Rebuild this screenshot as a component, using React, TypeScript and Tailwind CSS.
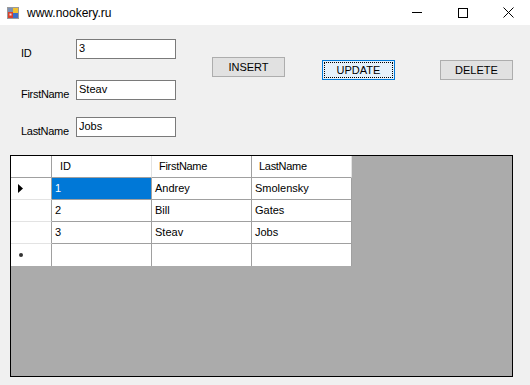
import { useState } from 'react'

const rows = [
  { id: '1', first: 'Andrey', last: 'Smolensky' },
  { id: '2', first: 'Bill', last: 'Gates' },
  { id: '3', first: 'Steav', last: 'Jobs' },
]

function FormIcon() {
  return (
    <svg width="12" height="12" viewBox="0 0 12 12">
      <rect x="0.5" y="0.5" width="11" height="11" fill="#f4f4f4" stroke="#9a9a9a" />
      <rect x="1" y="1" width="5" height="4" fill="#7a8fb3" />
      <rect x="6" y="1" width="5" height="5" fill="#f2c230" />
      <rect x="1" y="5" width="5" height="6" fill="#d9402b" />
      <rect x="6" y="6" width="5" height="5" fill="#3c6fc8" />
      <rect x="2.5" y="6.5" width="2" height="2" fill="#fbe0d8" />
    </svg>
  )
}

function Field({ label, value, mt }: { label: string; value: string; mt: string }) {
  return (
    <div className={`flex h-[20px] ${mt}`}>
      <div className="w-[55px] pt-[8px] text-[11px] leading-[13px] tracking-[-0.3px] text-black">{label}</div>
      <input
        defaultValue={value}
        className="h-[20px] w-[100px] border border-[#7a7a7a] bg-white px-[2px] pb-[2px] text-[11px] text-black outline-none"
      />
    </div>
  )
}

function Btn({ label, focused }: { label: string; focused?: boolean }) {
  return (
    <button
      className={`h-[20px] w-[73px] border text-[11px] text-black ${
        focused ? 'border-[#0078d7] bg-[#e5f1fb] p-[1px]' : 'border-[#adadad] bg-[#e1e1e1]'
      }`}
    >
      {focused ? (
        <span className="flex h-full w-full items-center justify-center border border-dotted border-black">{label}</span>
      ) : (
        label
      )}
    </button>
  )
}

export default function App() {
  const [selected] = useState(0)

  return (
    <div className="h-[385px] w-[530px] overflow-hidden bg-[#f0f0f0] font-['Liberation_Sans',Arial,sans-serif]">
      {/* заголовок окна */}
      <div className="flex h-[25px] items-center bg-white">
        <div className="ml-[7px] mt-[1px]">
          <FormIcon />
        </div>
        <div className="ml-[8px] text-[12px] text-black">www.nookery.ru</div>
        <div className="ml-auto flex h-full">
          <div className="flex w-[46px] items-center justify-center">
            <div className="h-px w-[10px] bg-black" />
          </div>
          <div className="flex w-[46px] items-center justify-center">
            <div className="h-[10px] w-[10px] border border-black" />
          </div>
          <div className="flex w-[44px] items-center justify-center">
            <svg width="11" height="11" viewBox="0 0 11 11">
              <path d="M0.5 0.5 L10.5 10.5 M10.5 0.5 L0.5 10.5" stroke="#000" strokeWidth="1" />
            </svg>
          </div>
        </div>
      </div>

      {/* поля и кнопки */}
      <div className="flex h-[130px]">
        <div className="ml-[21px] flex flex-col">
          <Field label="ID" value="3" mt="mt-[14px]" />
          <Field label="FirstName" value="Steav" mt="mt-[21px]" />
          <Field label="LastName" value="Jobs" mt="mt-[17px]" />
        </div>
        <div className="ml-[36px] mt-[32px] flex items-start">
          <Btn label="INSERT" />
          <div className="ml-[37px]">
            <Btn label="UPDATE" focused />
          </div>
          <div className="ml-[45px]">
            <Btn label="DELETE" />
          </div>
        </div>
      </div>

      {/* таблица */}
      <div className="ml-[10px] h-[222px] w-[503px] border border-black bg-[#ababab]">
        <div className="grid w-[341px] grid-cols-[41px_100px_100px_100px] bg-white text-[11px] text-black">
          <div className="h-[22px] border-b border-r border-b-[#a0a0a0] border-r-[#a0a0a0]" />
          <div className="flex h-[22px] items-center border-b border-r border-b-[#a0a0a0] border-r-[#e3e3e3] pl-[8px]">ID</div>
          <div className="flex h-[22px] items-center border-b border-r border-b-[#a0a0a0] border-r-[#a0a0a0] pl-[7px] tracking-[-0.3px]">FirstName</div>
          <div className="flex h-[22px] items-center border-b border-r border-b-[#a0a0a0] border-r-[#e3e3e3] pl-[7px] tracking-[-0.3px]">LastName</div>

          {rows.map((r, i) => (
            <div key={r.id} className="contents">
              <div className="flex h-[22px] items-center border-b border-r border-b-[#e3e3e3] border-r-[#a0a0a0] pl-[7px]">
                {i === selected && (
                  <svg width="5" height="9" viewBox="0 0 5 9">
                    <path d="M0 0 L5 4.5 L0 9 Z" fill="#000" />
                  </svg>
                )}
              </div>
              <div
                className={`flex h-[22px] items-center border-b border-r border-[#a0a0a0] pl-[3px] ${
                  i === selected ? 'bg-[#0078d7] text-white' : ''
                }`}
              >
                {r.id}
              </div>
              <div className="flex h-[22px] items-center border-b border-r border-[#a0a0a0] pl-[3px]">{r.first}</div>
              <div className="flex h-[22px] items-center border-b border-r border-[#a0a0a0] pl-[3px]">{r.last}</div>
            </div>
          ))}

          <div className="flex h-[22px] items-center border-r border-r-[#a0a0a0] pl-[8px]">
            <div className="h-[4px] w-[4px] rounded-full bg-[#333]" />
          </div>
          <div className="h-[22px] border-r border-[#a0a0a0]" />
          <div className="h-[22px] border-r border-[#a0a0a0]" />
          <div className="h-[22px] border-r border-[#a0a0a0]" />
        </div>
      </div>
    </div>
  )
}
